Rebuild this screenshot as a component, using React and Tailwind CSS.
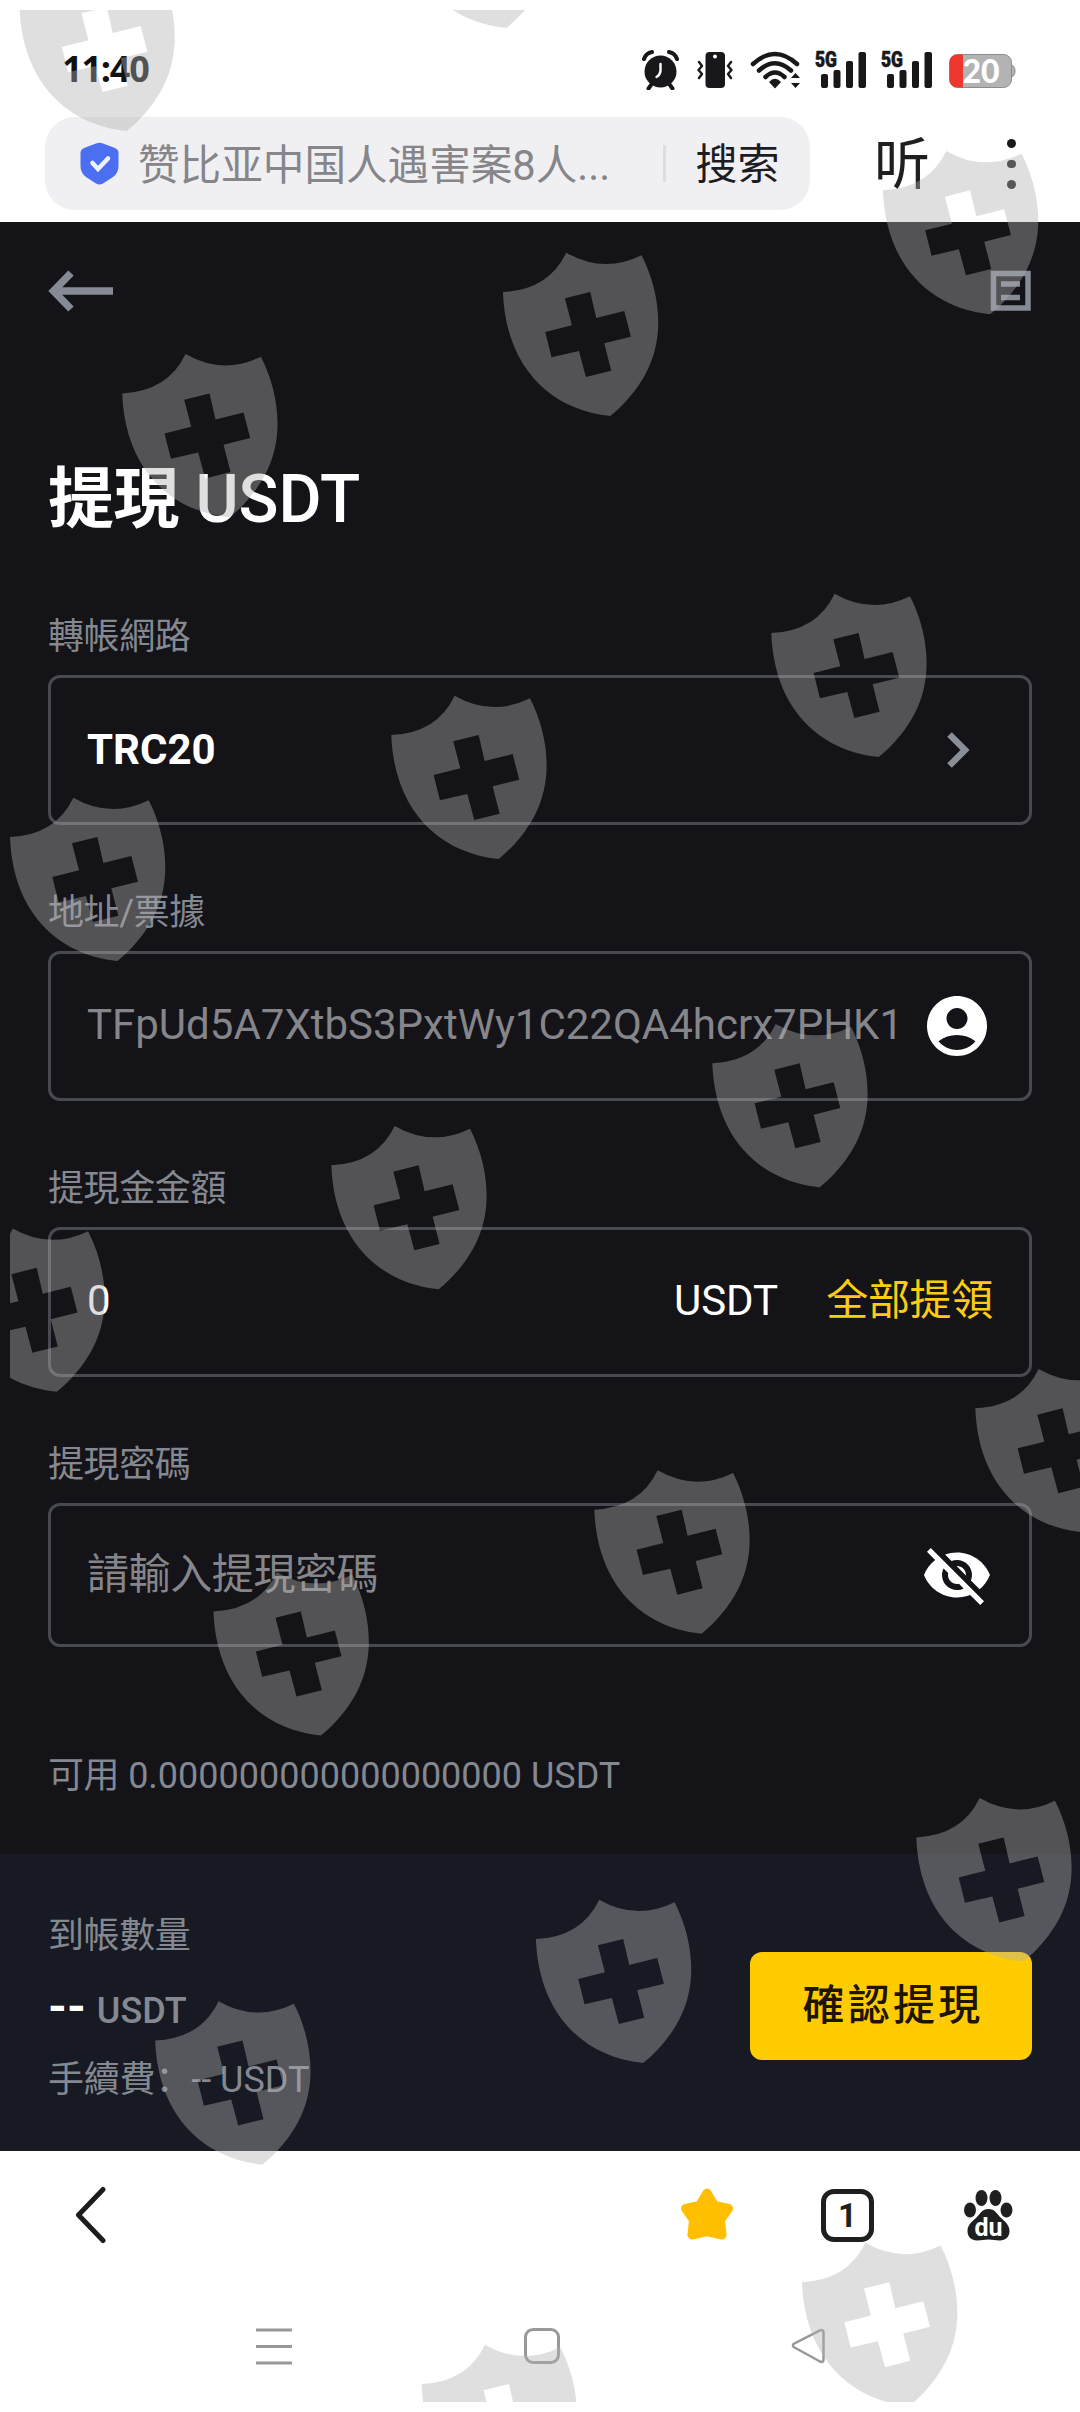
import { MdAccountCircle, MdVisibilityOff } from 'react-icons/md';

const shields = [
  [399, -96], [19.4, 7], [882.9, 190.3], [502.9, 292], [122.2, 393.4],
  [771.3, 633], [391.3, 735], [10, 837], [712.3, 1063.3], [331.3, 1165.3], [-50.6, 1267.8],
  [975.3, 1408.3], [594.3, 1509.7], [213.5, 1611.5], [916.3, 1837.4], [535.9, 1939],
  [155.2, 2040.5], [802, 2282.2], [421.6, 2384],
];

function ShieldOverlay() {
  return (
    <svg className="pointer-events-none absolute inset-0" width="1080" height="2412" viewBox="0 0 1080 2412">
      <defs>
        <clipPath id="overlay-area">
          <rect x="10" y="10" width="1070" height="2392" />
        </clipPath>
        <path
          id="shield"
          fillRule="evenodd"
          transform="scale(0.33333) translate(-68 -186)"
          d="M68 186Q205 180 258 68Q370 132 484 76C530 165 545 270 526 350C508 435 450 510 390 558C210 540 76 410 68 186ZM254 205L275 286L195 306L214 382L296 363L317 441L393 422L372 340L452 320L432 243L348 264L330 186Z"
        />
      </defs>
      <g clipPath="url(#overlay-area)" fill="#b0b0b0" fillOpacity="0.407">
        {shields.map(([x, y]) => (
          <use key={`${x}-${y}`} href="#shield" x={x} y={y} />
        ))}
      </g>
    </svg>
  );
}

function Signal() {
  return (
    <svg className="-mt-2.5" width="52" height="50" viewBox="0 -10 52 50" fill="#18181a">
      <text x="0" y="17" fontSize="22.500" fontWeight="900" stroke="#18181a" strokeWidth="0.6" textLength="22" lengthAdjust="spacingAndGlyphs" fontFamily="Roboto, sans-serif">5G</text>
      <rect x="6" y="24" width="7" height="14" rx="2" />
      <rect x="18.5" y="20" width="7" height="18" rx="2" />
      <rect x="31" y="11" width="7" height="27" rx="2" />
      <rect x="43.5" y="2" width="7.5" height="36" rx="2" />
    </svg>
  );
}

function StatusBar() {
  return (
    <div className="flex h-[117px] items-start justify-between pt-[50px] pr-[64px] pl-[62px]">
      <div className="font-['Open_Sans',sans-serif] text-[36px] leading-[38px] font-bold tracking-[-1.2px] text-[#111]">11:40</div>
      <div className="flex">
        <svg className="mr-[18px]" width="37" height="40" viewBox="0 0 37 40">
          <circle cx="18.5" cy="21.5" r="16" fill="#18181a" />
          <path d="M2 9Q4 3 10 2M35 9Q33 3 27 2M9 35L6.5 38.5M28 35L30.5 38.5" stroke="#18181a" strokeWidth="4" strokeLinecap="round" fill="none" />
          <path d="M18.5 14V21Q18 25 14.5 27" stroke="#fff" strokeWidth="2.4" strokeLinecap="round" fill="none" />
        </svg>
        <svg className="mr-[17px]" width="36" height="40" viewBox="0 0 36 40">
          <rect x="8.5" y="2" width="19.5" height="36" rx="4" fill="#18181a" />
          <circle cx="18" cy="6.5" r="2" fill="#fff" />
          <path d="M2 12L5 16L1.500 20L5 24L2 28M34 12L31 16L34.500 20L31 24L34 28" stroke="#18181a" strokeWidth="2.4" fill="none" strokeLinecap="round" strokeLinejoin="round" />
        </svg>
        <svg className="mr-[14px]" width="51" height="40" viewBox="0 0 51 40">
          <path d="M3 14Q25 -6 47 14M9 20.500Q25 6 41 20.500M15.500 27Q25 18 34.500 27" stroke="#18181a" strokeWidth="4.500" strokeLinecap="round" fill="none" />
          <path d="M19 32Q25 25.500 31 32L25 38.500ZM41 28L45.500 23L50 28ZM41 33L45.500 38L50 33Z" fill="#18181a" />
        </svg>
        <Signal />
        <div className="ml-[14px]">
          <Signal />
        </div>
        <svg className="ml-4" width="67" height="40" viewBox="0 0 67 40">
          <path d="M62 15Q66 15.500 66 21Q66 26.500 62 27Z" fill="#b3b3b3" stroke="#8c8c8c" />
          <rect x="0.5" y="4.500" width="62" height="33" rx="8" fill="#b3b3b3" stroke="#8c8c8c" />
          <path d="M14 4.500H8.500A8 8 0 0 0 0.500 12.500V29.500A8 8 0 0 0 8.500 37.500H14Z" fill="#ee382d" />
          <text x="32" y="32.500" textAnchor="middle" fontSize="32" fontWeight="900" fill="#fff" fontFamily="Lato, sans-serif">20</text>
        </svg>
      </div>
    </div>
  );
}

function SearchRow() {
  return (
    <div className="flex h-[105px] items-start pl-[45px]">
      <div className="flex h-[93px] w-[765px] items-center rounded-[30px] bg-[#f0f0f2] pl-[35px]">
        <svg width="39" height="43" viewBox="0 0 39 43">
          <path d="M16 1.500Q19.500 0 23 1.500L35 6Q38.500 7.500 38.500 11V24Q38.500 31 33 35L23 41.500Q19.500 43.500 16 41.500L6 35Q.5 31 .5 24V11Q.5 7.500 4 6Z" fill="#4b6ff0" />
          <path d="M12.500 21L18 27L28 16.500" stroke="#eef1ff" strokeWidth="4.500" strokeLinecap="round" fill="none" />
        </svg>
        <div className="mt-1 ml-[19px] w-[525px] text-[41.600px] leading-[60px] whitespace-nowrap text-[#85858a]">赞比亚中国人遇害案8人...</div>
        <div className="h-[37px] w-[3px] bg-[#dcdde3]" />
        <div className="mt-0.5 ml-[29.500px] text-[42px] leading-[60px] whitespace-nowrap text-[#1c1c22]">搜索</div>
      </div>
      <div className="mt-0.5 ml-[64px] text-[56px] leading-[92px] text-[#1f1f1f]">听</div>
      <div className="mt-[22px] ml-[77px] flex flex-col gap-3">
        <span className="size-[8.500px] rounded-full bg-[#1a1a1a]" />
        <span className="size-[8.500px] rounded-full bg-[#1a1a1a]" />
        <span className="size-[8.500px] rounded-full bg-[#1a1a1a]" />
      </div>
    </div>
  );
}

function Field({ label, boxClass, children }) {
  return (
    <div className="mb-[59px]">
      <div className="mb-[11px] pt-0.5 text-[36px] leading-[54px] tracking-[-0.400px] text-[#848891]">{label}</div>
      <div className={`flex items-center justify-between rounded-[12px] border-3 border-[#474b51] pr-9 pl-9 text-[42px] leading-[60px] whitespace-nowrap ${boxClass}`}>
        {children}
      </div>
    </div>
  );
}

function WithdrawForm() {
  return (
    <div className="h-[1632px] bg-[#131318] px-12 pt-12">
      <div className="flex h-[42px] items-center justify-between">
        <svg width="66" height="42" viewBox="0 0 66 42">
          <path d="M65 21H6M23 3L5.500 21L23 39" stroke="#858a94" strokeWidth="7.500" fill="none" />
        </svg>
        <svg width="42" height="42" viewBox="0 0 42 42">
          <path d="M3.500 3.500H38V38H3.500ZM11 14H30M11 27.500H30" stroke="#858a94" strokeWidth="5.500" fill="none" />
        </svg>
      </div>
      <h1 className="mt-[140px] text-[66px] leading-[96px] font-medium text-white">
        <span className="font-bold tracking-[-0.500px]">提現</span> USDT
      </h1>
      <div className="mt-[60px]">
        <Field label="轉帳網路" boxClass="h-[150px]">
          <span className="font-bold text-white">TRC20</span>
          <svg className="mr-[23px]" width="24" height="38" viewBox="0 0 24 38">
            <path d="M3.500 3.500L19 19L3.500 34.500" stroke="#8a8e97" strokeWidth="6.500" fill="none" />
          </svg>
        </Field>
        <Field label="地址/票據" boxClass="h-[150px]">
          <span className="-mt-0.5 text-[#85858a]">TFpUd5A7XtbS3PxtWy1C22QA4hcrx7PHK1</span>
          <MdAccountCircle className="size-[72px] text-white" />
        </Field>
        <Field label="提現金金額" boxClass="h-[150px]">
          <span className="-mt-0.5 text-white">0</span>
          <div className="-mt-0.5 flex gap-12">
            <span className="text-white">USDT</span>
            <span className="tracking-[-0.300px] text-[#fccb14]">全部提領</span>
          </div>
        </Field>
        <Field label="提現密碼" boxClass="h-[144px]">
          <span className="tracking-[-0.400px] text-[#85858a]">請輸入提現密碼</span>
          <MdVisibilityOff className="size-[72px] text-white" />
        </Field>
      </div>
      <div className="mt-[102px] text-[36px] leading-[54px] text-[#848891]">
        <span className="tracking-[-0.400px]">可用</span> 0.000000000000000000 USDT
      </div>
    </div>
  );
}

function SummaryBar() {
  return (
    <div className="flex h-[297px] items-start justify-between bg-[#171a22] px-12 text-[36px] leading-[54px] text-[#848891]">
      <div className="pt-[55px]">
        <div className="tracking-[-0.400px]">到帳數量</div>
        <div className="mt-3.5 flex h-[60px] items-baseline">
          <span className="text-[48px] leading-[60px] font-bold text-white">--</span>
          <span className="ml-[11px] font-medium">USDT</span>
        </div>
        <div className="mt-4">
          <span className="tracking-[-0.200px]">手續費：</span>-- USDT
        </div>
      </div>
      <button className="mt-[98px] h-[108px] w-[282px] rounded-[12px] bg-[#ffcc00] pl-1 text-[42px] font-medium tracking-[3.200px] text-[#1e1400]">確認提現</button>
    </div>
  );
}

function BrowserToolbar() {
  return (
    <div className="flex h-[128px] items-center bg-white pl-[74px]">
      <svg width="33" height="58" viewBox="0 0 33 58">
        <path d="M29 3.500L4.500 29L29 54.500" stroke="#1c1c1e" strokeWidth="5" strokeLinecap="round" strokeLinejoin="round" fill="none" />
      </svg>
      <svg className="ml-[573px]" width="54" height="54" viewBox="0 0 54 54">
        <path d="M27 5L34.500 17.500L48.500 20.500L40.500 32L42 47L27 43.500L12 47L13.500 32L5.500 20.500L19.500 17.500Z" fill="#ffbf00" stroke="#ffbf00" strokeWidth="9" strokeLinejoin="round" />
      </svg>
      <div className="ml-[87px] flex size-[53px] items-center justify-center rounded-[13px] border-5 border-[#1f1f1f] font-[Roboto,sans-serif] text-[33px] leading-none font-bold text-[#1f1f1f]">1</div>
      <svg className="ml-[90px]" width="49" height="54" viewBox="0 0 49 54" fill="#1f1f1f">
        <ellipse cx="17.500" cy="10" rx="6" ry="8" />
        <ellipse cx="31.500" cy="10" rx="6" ry="8" />
        <ellipse cx="6" cy="22" rx="6" ry="7.500" />
        <ellipse cx="42.500" cy="22" rx="6" ry="7.500" />
        <path d="M24.500 21C31 21 33 26 37 30C41 33.500 45.500 37 45.500 43C45.500 49 41.500 52.500 36 52.500C31 52.500 29 51.500 24.500 51.500C20 51.500 18 52.500 13 52.500C7.500 52.500 3.500 49 3.500 43C3.500 37 8 33.500 12 30C16 26 18 21 24.500 21Z" />
        <text x="24.500" y="47.500" textAnchor="middle" fontSize="25" fontWeight="700" fill="#fff" fontFamily="Roboto, sans-serif">du</text>
      </svg>
    </div>
  );
}

function SystemNav() {
  return (
    <div className="flex h-[133px] items-center bg-white pl-[256px]">
      <svg width="36" height="38" viewBox="0 0 36 38">
        <path d="M0 3H36M0 19.500H36M0 36H36" stroke="#999" strokeWidth="3" />
      </svg>
      <div className="ml-[232px] size-[36px] rounded-[9px] border-[3px] border-[#999]" />
      <svg className="ml-[231px]" width="34" height="38" viewBox="0 0 34 38">
        <path d="M2.500 17Q1 19 3.500 20.500L29 34.500Q32.500 36 32.500 32.500V5.500Q32.500 2 29 3.500Z" stroke="#999" strokeWidth="2.500" fill="none" />
      </svg>
    </div>
  );
}

export default function App() {
  return (
    <div className="relative h-[2412px] w-[1080px] overflow-hidden bg-white font-[Roboto,'Noto_Sans_CJK_SC',sans-serif]">
      <StatusBar />
      <SearchRow />
      <WithdrawForm />
      <SummaryBar />
      <BrowserToolbar />
      <SystemNav />
      <ShieldOverlay />
    </div>
  );
}
